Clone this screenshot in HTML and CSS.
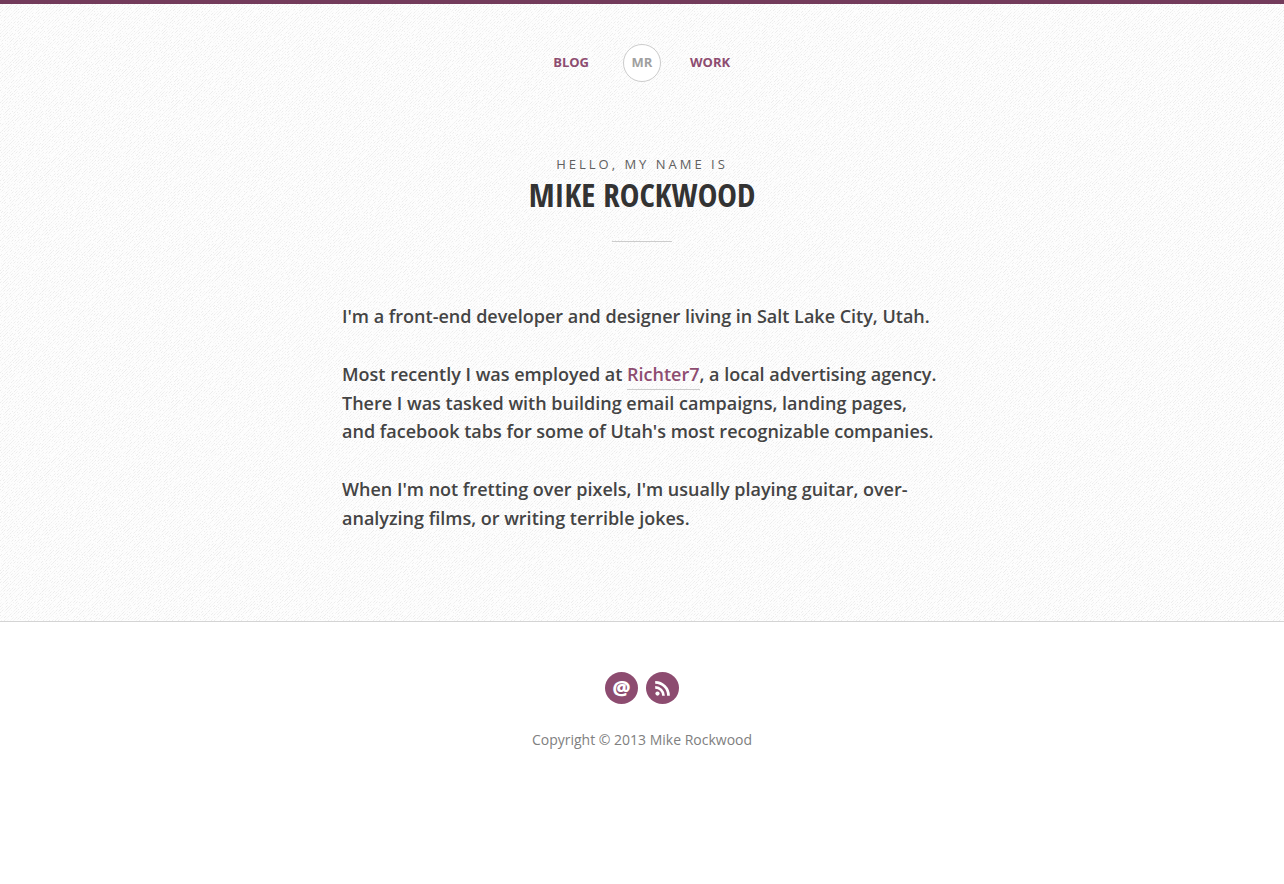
FILE: index.html
```html
<!DOCTYPE html>
<html lang="en">
<head>
<meta charset="utf-8">
<title>Mike Rockwood</title>
<link rel="stylesheet" href="styles.css">
</head>
<body>
<div class="main">
  <header>
    <nav class="nav" aria-label="Main">
      <a class="nav-link nav-left" href="#blog">Blog</a>
      <a class="logo" href="#home">MR</a>
      <a class="nav-link" href="#work">Work</a>
    </nav>
  </header>
  <main>
    <div class="intro">
      <p class="greeting">Hello, my name is</p>
      <h1 class="name">Mike Rockwood</h1>
    </div>
    <div class="bio">
      <p>I'm a front-end developer and designer living in Salt Lake City, Utah.</p>
      <p>Most recently I was employed at <a class="bio-link" href="#richter7">Richter7</a>, a local advertising agency. There I was tasked with building email campaigns, landing pages, and facebook tabs for some of Utah's most recognizable companies.</p>
      <p>When I'm not fretting over pixels, I'm usually playing guitar, over-analyzing films, or writing terrible jokes.</p>
    </div>
  </main>
</div>
<footer class="footer">
  <div class="social">
    <a class="badge badge-at" href="#email" aria-label="Email">@</a>
    <a class="badge" href="#feed" aria-label="RSS feed">
      <svg width="17" height="16" viewBox="0 0 17 16" aria-hidden="true">
        <circle cx="3.5" cy="13.6" r="2.1" fill="#fff"/>
        <path d="M1.2 7.4a8.3 8.3 0 0 1 8.3 8.3M1.2 2.4a13.3 13.3 0 0 1 13.3 13.3" fill="none" stroke="#fff" stroke-width="2.7"/>
      </svg>
    </a>
  </div>
  <p class="copyright">Copyright © 2013 Mike Rockwood</p>
</footer>
</body>
</html>
```
FILE: styles.css
```css
* { box-sizing: border-box; }

body {
  margin: 0;
  background: #fff;
  color: #444;
  font-family: "Open Sans", "Noto Sans", sans-serif;
}

p, h1 { margin: 0; }
a { color: #8d4c70; text-decoration: none; }

.main {
  padding: 40px 24px 88px;
  border-top: 4px solid #733b5b;
  border-bottom: 1px solid #d4d4d4;
  background-color: #fdfdfd;
  background-image: url("data:image/svg+xml,%3Csvg xmlns='http://www.w3.org/2000/svg' width='300' height='300'%3E%3Cdefs%3E%3Cfilter id='n' x='0' y='0' width='100%25' height='100%25'%3E%3CfeTurbulence type='fractalNoise' baseFrequency='.5' numOctaves='2' stitchTiles='stitch' result='t'/%3E%3CfeColorMatrix in='t' values='0 0 0 0 .5 0 0 0 0 .5 0 0 0 0 .5 5 0 0 0 -2' result='m'/%3E%3CfeComposite in='SourceGraphic' in2='m' operator='in'/%3E%3C/filter%3E%3Cpattern id='p' width='3' height='3' patternUnits='userSpaceOnUse'%3E%3Cpath fill='%23888' fill-opacity='.14' d='M0 2h1v1H0zM1 1h1v1H1zM2 0h1v1H2z'/%3E%3C/pattern%3E%3C/defs%3E%3Crect width='300' height='300' fill='url(%23p)' filter='url(%23n)'/%3E%3C/svg%3E");
}

.nav {
  display: grid;
  grid-template-columns: 1fr 38px 1fr;
  column-gap: 29px;
  align-items: center;
}
.nav-link {
  padding-bottom: 2px;
  font-size: 13px;
  font-weight: 700;
  text-transform: uppercase;
}
.nav-left { justify-self: end; margin-right: 5px; }
.logo {
  height: 38px;
  border: 1px solid #ccc;
  border-radius: 50%;
  background: #fff;
  color: #a0a0a0;
  font-size: 13px;
  font-weight: 700;
  line-height: 34px;
  text-align: center;
}

.intro { padding-top: 72px; text-align: center; }
.greeting {
  color: #606060;
  font-size: 13px;
  line-height: 20px;
  letter-spacing: 3px;
  text-transform: uppercase;
}
.name {
  color: #333;
  font-family: "Open Sans Condensed", "Open Sans", sans-serif;
  font-size: 33px;
  font-weight: 700;
  line-height: 42px;
  text-transform: uppercase;
}
.name::after {
  content: "";
  display: block;
  width: 60px;
  margin: 25px auto 0;
  border-top: 1px solid #ccc;
}

.bio {
  display: grid;
  gap: 29px;
  max-width: 600px;
  margin: 60px auto 0;
  font-size: 18px;
  font-weight: 600;
  line-height: 1.6;
}
.bio-link { padding-bottom: 3px; border-bottom: 1px solid #ccc; }

.footer { padding: 50px 24px; text-align: center; }
.social { display: flex; justify-content: center; gap: 8px; }
.badge {
  display: grid;
  place-items: center;
  width: 33px;
  height: 32px;
  border-radius: 50%;
  background: #8d4c70;
}
.badge-at { color: #fff; font-size: 20px; font-weight: 800; line-height: 32px; }
.copyright {
  margin-top: 24px;
  color: #808080;
  font-size: 14px;
  line-height: 24px;
}
```
